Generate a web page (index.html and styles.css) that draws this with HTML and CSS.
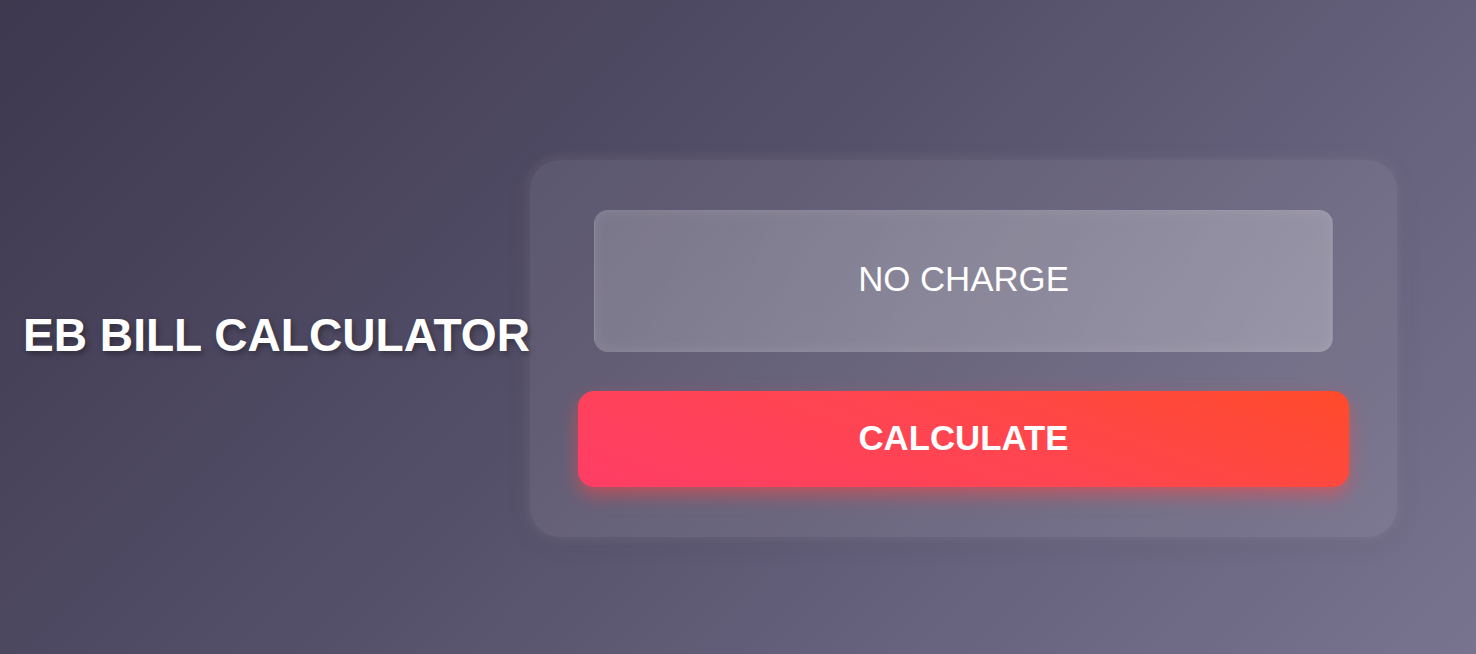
FILE: index.html
```html
<!DOCTYPE html>
<html lang="en">
<head>
<meta charset="utf-8">
<title>EB Bill Calculator</title>
<link rel="stylesheet" href="styles.css">
</head>
<body>
<main class="page">
  <h1 class="title">EB BILL CALCULATOR</h1>
  <section class="card">
    <div class="result">NO CHARGE</div>
    <button class="calc-btn" type="button">CALCULATE</button>
  </section>
</main>
</body>
</html>
```
FILE: styles.css
```css
* { box-sizing: border-box; }
html, body { margin: 0; padding: 0; }
body {
  width: 1476px;
  height: 654px;
  overflow: hidden;
  font-family: "Liberation Sans", Arial, sans-serif;
  background: linear-gradient(135deg, #3d384e 0%, #55506a 45%, #78738f 100%);
}
.page {
  height: 654px;
  display: flex;
  align-items: center;
  padding-left: 23px;
  padding-top: 43px;
}
.title {
  flex-shrink: 0;
  width: 507px;
  margin: 0 0 27px 0;
  font-size: 46.1px;
  font-weight: 700;
  color: #ffffff;
  white-space: nowrap;
  text-shadow: 2px 3px 6px rgba(0, 0, 0, 0.35);
}
.card {
  flex-shrink: 0;
  width: 867px;
  padding: 50px 64px;
  border-radius: 30px;
  background: rgba(255, 255, 255, 0.08);
  box-shadow: 0 0 10px 3px rgba(255, 255, 255, 0.06), 0 0 24px 8px rgba(255, 255, 255, 0.025), 0 6px 30px rgba(0, 0, 0, 0.06);
  display: flex;
  flex-direction: column;
}
.result {
  height: 142px;
  border-radius: 14px;
  background: linear-gradient(110deg, rgba(255,255,255,0.18), rgba(255,255,255,0.26));
  border: 1px solid rgba(255, 255, 255, 0.06);
  box-shadow: inset 0 0 14px rgba(255, 255, 255, 0.09);
  display: flex;
  align-items: center;
  justify-content: center;
  padding-bottom: 4px;
  color: #ffffff;
  font-size: 34.8px;
}
.calc-btn {
  margin: 39px -16px 0;
  height: 96px;
  border: none;
  border-radius: 16px;
  background: linear-gradient(20deg, #ff3d66 0%, #ff4550 50%, #ff4b2b 100%);
  box-shadow: 0 8px 18px rgba(255, 70, 70, 0.55);
  color: #ffffff;
  font-family: "Liberation Sans", Arial, sans-serif;
  font-size: 34.8px;
  font-weight: 700;
  padding-bottom: 4px;
  cursor: pointer;
}
```
